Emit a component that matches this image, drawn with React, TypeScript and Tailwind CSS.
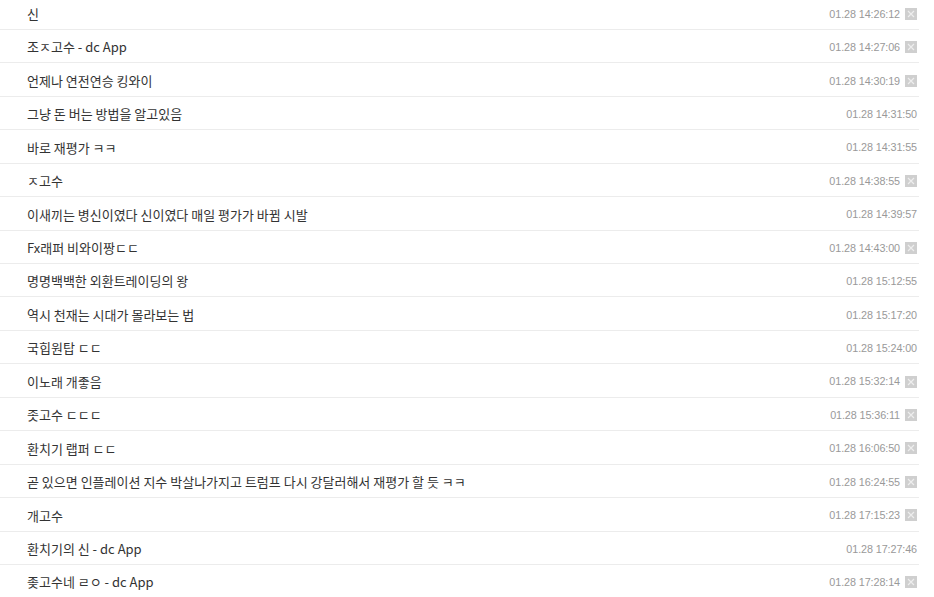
import React from "react"

interface Row {
    text: string;
    time: string;
    del: boolean;
}

const rows: Row[] = [
    { text: "신", time: "01.28 14:26:12", del: true },
    { text: "조ㅈ고수 - dc App", time: "01.28 14:27:06", del: true },
    { text: "언제나 연전연승 킹와이", time: "01.28 14:30:19", del: true },
    { text: "그냥 돈 버는 방법을 알고있음", time: "01.28 14:31:50", del: false },
    { text: "바로 재평가 ㅋㅋ", time: "01.28 14:31:55", del: false },
    { text: "ㅈ고수", time: "01.28 14:38:55", del: true },
    { text: "이새끼는 병신이였다 신이였다 매일 평가가 바뀜 시발", time: "01.28 14:39:57", del: false },
    { text: "Fx래퍼 비와이짱ㄷㄷ", time: "01.28 14:43:00", del: true },
    { text: "명명백백한 외환트레이딩의 왕", time: "01.28 15:12:55", del: false },
    { text: "역시 천재는 시대가 몰라보는 법", time: "01.28 15:17:20", del: false },
    { text: "국힙원탑 ㄷㄷ", time: "01.28 15:24:00", del: false },
    { text: "이노래 개좋음", time: "01.28 15:32:14", del: true },
    { text: "좃고수 ㄷㄷㄷ", time: "01.28 15:36:11", del: true },
    { text: "환치기 랩퍼 ㄷㄷ", time: "01.28 16:06:50", del: true },
    { text: "곧 있으면 인플레이션 지수 박살나가지고 트럼프 다시 강달러해서 재평가 할 듯 ㅋㅋ", time: "01.28 16:24:55", del: true },
    { text: "개고수", time: "01.28 17:15:23", del: true },
    { text: "환치기의 신 - dc App", time: "01.28 17:27:46", del: false },
    { text: "좆고수네 ㄹㅇ - dc App", time: "01.28 17:28:14", del: true },
]

const DelIcon: React.FC = () => (
    <span className="ml-[5px] flex h-3 w-3 items-center justify-center bg-[#cfcfcf]">
        <svg width="8" height="8" viewBox="0 0 8 8">
            <path d="M1 1L7 7M7 1L1 7" stroke="#eeeeee" strokeWidth="1.2" />
        </svg>
    </span>
)

export default function App() {
    return (
        <div className="h-[597px] w-[934px] overflow-hidden bg-white">
            <ul className="-mt-[3.5px] w-[919px]">
                {rows.map((r, i) => (
                    <li
                        key={i}
                        className="flex h-[33.45px] items-center justify-between border-b border-[#ececec] pl-[27px] pr-[2px] pt-[2px]"
                    >
                        <span className="font-['Noto_Sans_CJK_KR',sans-serif] text-[13px] text-[#333]">
                            {r.text}
                        </span>
                        <span className="flex items-center">
                            <span className="font-['Liberation_Sans',Arial,sans-serif] text-[10.8px] tracking-[-0.1px] text-[#999]">
                                {r.time}
                            </span>
                            {r.del && <DelIcon />}
                        </span>
                    </li>
                ))}
            </ul>
        </div>
    )
}
